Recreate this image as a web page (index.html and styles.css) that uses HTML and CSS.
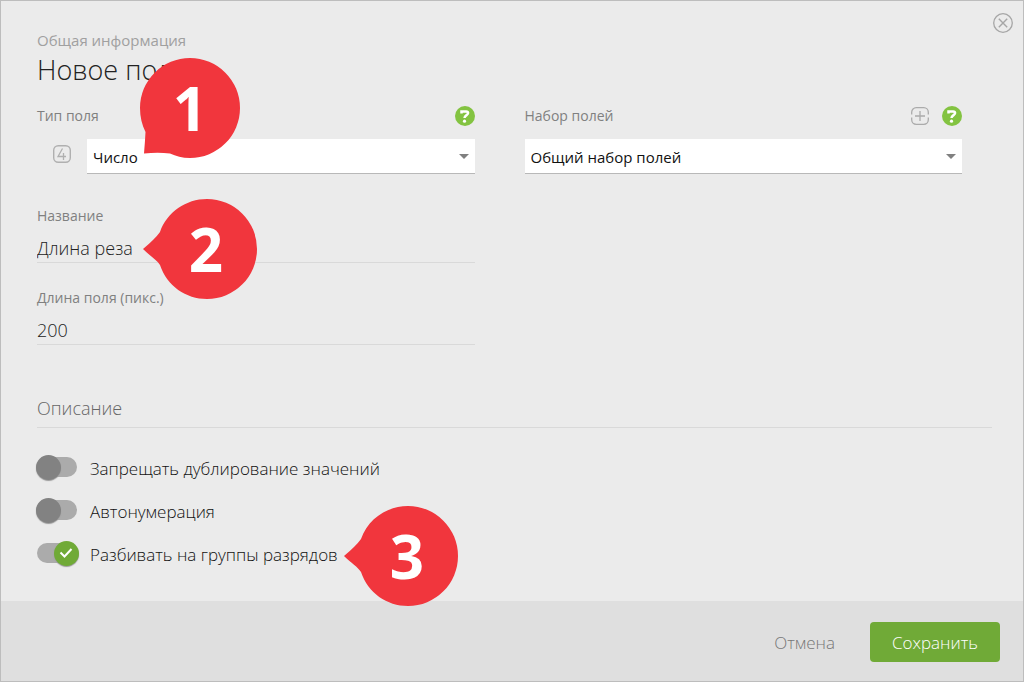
FILE: index.html
```html
<!DOCTYPE html>
<html lang="ru">
<head>
<meta charset="utf-8">
<meta name="viewport" content="width=device-width, initial-scale=1">
<title>Новое поле</title>
<link rel="stylesheet" href="styles.css">
</head>
<body>
<form class="dialog">
  <button class="icon-button close" type="button" aria-label="Закрыть">
    <svg width="20" height="20" viewBox="0 0 20 20" fill="none" stroke="#a6a6a6"><circle cx="10" cy="10" r="9.3" stroke-width="1.3"/><path d="M5.8 5.8l8.4 8.4M14.2 5.8l-8.4 8.4" stroke-width="1.4"/></svg>
  </button>

  <main class="content">
    <header class="heading">
      <p class="crumb">Общая информация</p>
      <h1 class="title">Новое поле</h1>
    </header>

    <div class="columns">
      <section class="field">
        <div class="label-row">
          <label class="label" for="type">Тип поля</label>
          <button class="icon-button" type="button" aria-label="Справка: тип поля">
            <svg width="20" height="20" viewBox="0 0 20 20" fill="none"><circle cx="10" cy="10" r="10" fill="#83c341"/><path d="M6.500 7.500V5.400h4.700c1.300 0 1.900.7 1.900 1.700 0 2.100-3.600 2-3.600 5" stroke="#fff" stroke-width="2.500"/><circle cx="9.500" cy="15.200" r="1.600" fill="#fff"/></svg>
          </button>
        </div>
        <div class="type-row">
          <svg class="type-icon" width="18" height="18" viewBox="0 0 18 18" fill="none" stroke="#b0b0b0"><rect x=".7" y=".7" width="16.600" height="16.600" rx="4.500" stroke-width="1.400"/><path d="M9.500 3.500L5 11.500h8M10.500 8V15" stroke-width="1.300"/></svg>
          <div class="select-box">
            <select class="select" id="type"><option>Число</option></select>
            <svg class="arrow" width="10" height="5" viewBox="0 0 10 5"><path d="M0 0h10L5 5z" fill="#808080"/></svg>
          </div>
        </div>
        <div class="callout callout-type">
          <svg width="100" height="100" viewBox="0 0 100 100"><path d="M50 0a50 50 0 1 1 0 100c-8 0-14-2-20-4.500Q18 94 4 95.500Q5 84 5.500 74C2 67 0 59 0 50A50 50 0 0 1 50 0z" fill="#f1363d"/></svg>
          <span class="callout-number">1</span>
        </div>
      </section>

      <section class="field">
        <div class="label-row">
          <label class="label" for="set">Набор полей</label>
          <button class="icon-button" type="button" aria-label="Добавить набор">
            <svg width="18" height="18" viewBox="0 0 18 18" fill="none" stroke="#ababab" stroke-width="1.300"><path d="M.7 7.500V5.200A4.500 4.500 0 0 1 5.200.7h7.600a4.500 4.500 0 0 1 4.500 4.500v2.300M17.300 10.500v2.300a4.500 4.500 0 0 1-4.500 4.500H5.200a4.500 4.500 0 0 1-4.500-4.500v-2.300M9 4v10M4 9h10"/></svg>
          </button>
          <button class="icon-button" type="button" aria-label="Справка: набор полей">
            <svg width="20" height="20" viewBox="0 0 20 20" fill="none"><circle cx="10" cy="10" r="10" fill="#83c341"/><path d="M6.500 7.500V5.400h4.700c1.300 0 1.900.7 1.900 1.700 0 2.100-3.600 2-3.600 5" stroke="#fff" stroke-width="2.500"/><circle cx="9.500" cy="15.200" r="1.600" fill="#fff"/></svg>
          </button>
        </div>
        <div class="select-box">
          <select class="select" id="set"><option>Общий набор полей</option></select>
          <svg class="arrow" width="10" height="5" viewBox="0 0 10 5"><path d="M0 0h10L5 5z" fill="#808080"/></svg>
        </div>
      </section>

      <section class="field text-fields">
        <div class="text-field">
          <label class="label" for="name">Название</label>
          <input class="input" id="name" type="text" value="Длина реза">
          <div class="callout callout-name">
            <svg width="114" height="100" viewBox="0 0 114 100"><path d="M64 0a50 50 0 1 1 0 100C43 100 24 87 17 66C14 61 7 57 0 50Q12 40 17 33C24 13 43 0 64 0z" fill="#f1363d"/></svg>
            <span class="callout-number callout-number-side">2</span>
          </div>
        </div>
        <div class="text-field">
          <label class="label" for="width">Длина поля (пикс.)</label>
          <input class="input" id="width" type="text" value="200">
        </div>
      </section>
    </div>

    <h2 class="subtitle">Описание</h2>

    <div class="toggles">
      <label class="toggle"><input class="switch" type="checkbox"><span>Запрещать дублирование значений</span></label>
      <label class="toggle"><input class="switch" type="checkbox"><span>Автонумерация</span></label>
      <div class="toggle-line">
        <label class="toggle">
          <span class="switch-box">
            <input class="switch" type="checkbox" checked>
            <svg class="check" width="14" height="12" viewBox="0 0 14 12" fill="none" stroke="#fff" stroke-width="2"><path d="M1.500 5.500l4 4 7-7.500"/></svg>
          </span>
          <span>Разбивать на группы разрядов</span>
        </label>
        <div class="callout callout-groups">
          <svg width="114" height="100" viewBox="0 0 114 100"><path d="M64 0a50 50 0 1 1 0 100C43 100 24 87 17 66C14 61 7 57 0 50Q12 40 17 33C24 13 43 0 64 0z" fill="#f1363d"/></svg>
          <span class="callout-number callout-number-side">3</span>
        </div>
      </div>
    </div>
  </main>

  <footer class="footer">
    <button class="cancel" type="button">Отмена</button>
    <button class="save" type="submit">Сохранить</button>
  </footer>
</form>
</body>
</html>
```
FILE: styles.css
```css
* {
  box-sizing: border-box;
}

body {
  margin: 0;
  background: #ebebeb;
  color: #111;
  font-family: "Open Sans", "Noto Sans", sans-serif;
  font-size: 17px;
  font-weight: 300;
}

button,
input,
select {
  font: inherit;
}

.dialog {
  position: relative;
  display: flex;
  flex-direction: column;
  min-height: 100vh;
  border: 1px solid #bdbdbd;
}

.icon-button {
  display: flex;
  padding: 0;
  border: 0;
  background: none;
  cursor: pointer;
}

.close {
  position: absolute;
  top: 12px;
  right: 10px;
}

.content {
  flex: 1;
  padding: 29px 31px 24px 36px;
}

.heading {
  margin-bottom: 13px;
}

.crumb {
  margin: 0;
  color: #a0a0a0;
  font-size: 15px;
  font-weight: 400;
  line-height: 20px;
}

.title {
  margin: 0;
  color: #222;
  font-size: 27px;
  font-weight: 350;
  line-height: 40px;
}

.columns {
  display: grid;
  grid-template-columns: 1fr 1fr;
  column-gap: 50px;
  row-gap: 32px;
  padding-right: 30px;
}

.field {
  position: relative;
  min-width: 0;
}

.label-row {
  display: flex;
  align-items: center;
  gap: 13px;
  height: 26px;
  margin-bottom: 10px;
}

.label {
  flex: 1;
  color: #808080;
  font-size: 14px;
  font-weight: 400;
  line-height: 20px;
}

.type-row {
  display: flex;
  align-items: center;
  gap: 16px;
  padding-left: 16px;
}

.type-icon {
  flex: none;
  margin-bottom: 6px;
}

.select-box {
  position: relative;
  flex: 1;
}

.select {
  display: block;
  width: 100%;
  height: 35px;
  padding: 2px 24px 0 6px;
  border: 0;
  border-bottom: 1px solid #b8b8b8;
  border-radius: 0;
  background: #fff;
  color: #111;
  font-size: 15px;
  font-weight: 400;
  appearance: none;
}

.arrow {
  position: absolute;
  top: 15px;
  right: 6px;
  pointer-events: none;
}

.text-fields {
  display: grid;
  gap: 25px;
}

.text-field {
  position: relative;
  display: flex;
  flex-direction: column;
  gap: 6px;
}

.input {
  width: 100%;
  height: 31px;
  padding: 2px 0 0;
  border: 0;
  border-bottom: 1px solid #d9d9d9;
  background: none;
  color: #222;
  font-size: 18px;
  font-weight: 350;
}

.subtitle {
  margin: 49px 0 27px;
  padding-bottom: 5px;
  border-bottom: 1px solid #d9d9d9;
  color: #666;
  font-size: 18px;
  font-weight: 300;
  line-height: 28px;
}

.toggles {
  display: flex;
  flex-direction: column;
  align-items: flex-start;
  gap: 15px;
}

.toggle-line,
.switch-box {
  position: relative;
  display: flex;
}

.toggle {
  display: flex;
  align-items: flex-start;
  gap: 11px;
  line-height: 28px;
}

.switch {
  position: relative;
  width: 42px;
  height: 26px;
  margin: 0;
  appearance: none;
}

.switch::before {
  content: "";
  position: absolute;
  top: 2px;
  left: 0;
  width: 40px;
  height: 20px;
  border-radius: 10px;
  background: #ababab;
}

.switch::after {
  content: "";
  position: absolute;
  top: 0;
  left: -1px;
  width: 25px;
  height: 25px;
  border-radius: 50%;
  background: #828282;
  box-shadow: 0 1px 1px #999;
}

.switch:checked::after {
  left: 17px;
  background: #70aa37;
}

.check {
  position: absolute;
  top: 6px;
  left: 22px;
}

.callout {
  position: absolute;
  pointer-events: none;
}

.callout svg {
  display: block;
}

.callout-type {
  top: -45px;
  left: 103px;
}

.callout-name {
  top: -7px;
  left: 106px;
}

.callout-groups {
  top: -35px;
  left: 307px;
}

.callout-number {
  position: absolute;
  inset: 0;
  color: #fff;
  font-family: "Open Sans", sans-serif;
  font-size: 60px;
  font-weight: 700;
  line-height: 100px;
  text-align: center;
}

.callout-number-side {
  padding-left: 12px;
}

.footer {
  display: flex;
  align-items: center;
  justify-content: flex-end;
  gap: 35px;
  height: 80px;
  padding: 2px 23px 0;
  background: #dfdfdf;
}

.cancel {
  padding: 0;
  border: 0;
  background: none;
  color: #777;
}

.save {
  width: 130px;
  height: 40px;
  padding: 0;
  border: 0;
  border-radius: 4px;
  background: #70aa37;
  color: #fff;
  font-weight: 350;
}
```
